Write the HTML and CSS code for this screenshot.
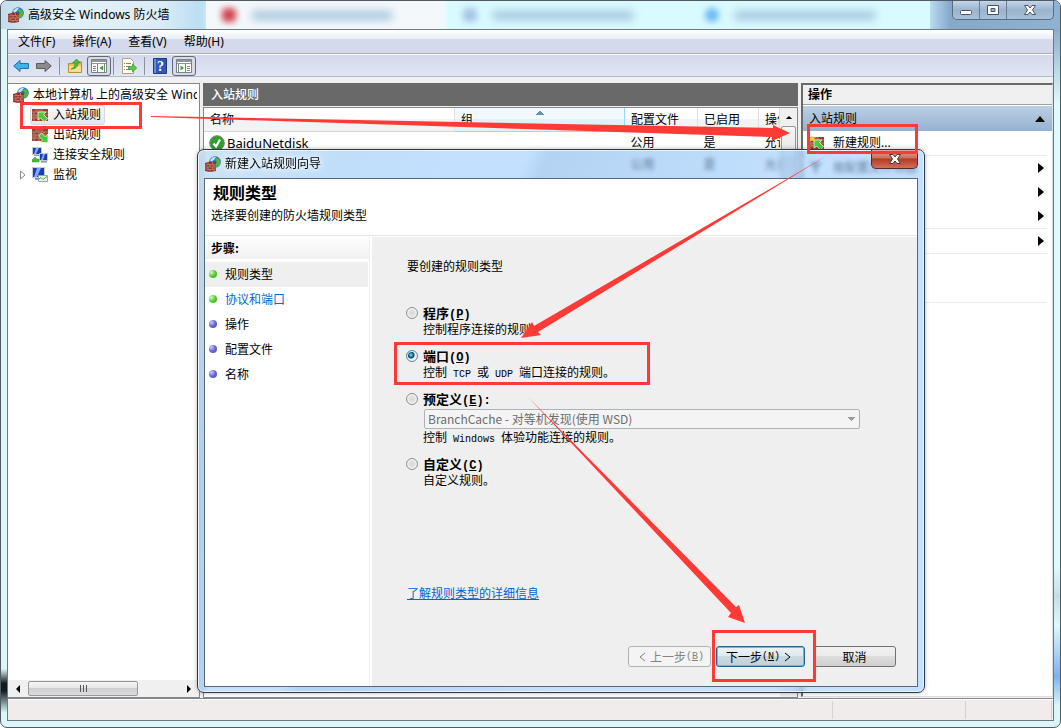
FILE: index.html
```html
<!DOCTYPE html>
<html lang="zh-CN">
<head>
    <meta charset="UTF-8">
    <meta name="viewport" content="width=device-width, initial-scale=1.0">
    <title>高级安全 Windows 防火墙</title>
    <link rel="stylesheet" href="styles.css">
</head>
<body>
    <!-- shared icons -->
    <svg class="symbols" aria-hidden="true">
        <symbol id="bricks" viewBox="0 0 16 16">
            <path fill="#96402f" d="M0 2h16v12H0z"/>
            <path stroke="#c98f80" stroke-width=".8" d="M0 5h16M0 8h16M0 11h16M4 2v3M10 2v3M2 5v3M7 5v3M12 5v3M4 8v3M10 8v3M2 11v3M7 11v3M12 11v3"/>
            <path fill="#b9604d" d="M5 2.500h4v2H5zM8 5.500h3v2H8zM0 8.500h3v2H0z"/>
        </symbol>
        <symbol id="firewall" viewBox="0 0 16 16">
            <circle cx="10" cy="6" r="5.800" fill="#2468b4"/>
            <path fill="#bfe4fa" d="M5 4q3-4 6-3-1 3-5 5z"/>
            <path fill="#55b53c" d="M11 1.500l3 1.500 1.500 3-1.500 4-3 1-1-3 2-2-2-2z"/>
            <path fill="#8a3528" d="M0 7l5-1.500 6 1V15l-6 1-5-1z"/>
            <path fill="none" stroke="#cf9686" stroke-width=".7" d="M0 9l5-.5 6 .5M0 11h11M0 13l5 .5 6-.5M3 6.500v2.300M7.500 6v2.500M5 8.500V11M9 8.700V11M3 11v2.200M7.500 11v2.200M5 13.500V16M9 13.200V15.500"/>
        </symbol>
        <symbol id="inbound" viewBox="0 0 16 16">
            <use href="#bricks"/>
            <path fill="#4ec83b" stroke="#e9ffe4" stroke-width=".8" d="M6 5h8l-2.500 2.500 4 4-3 3.500-4-4L6 13z"/>
        </symbol>
        <symbol id="outbound" viewBox="0 0 16 16">
            <use href="#bricks"/>
            <path fill="#4ec83b" stroke="#e9ffe4" stroke-width=".8" d="M16 15.500H8l2.500-2.500-4-4 3-3 4 4L16 7z"/>
        </symbol>
        <symbol id="caret" viewBox="0 0 6 10">
            <path d="M0 0l6 5-6 5z"/>
        </symbol>
    </svg>

    <div class="window">
        <div class="titlebar">
            <svg class="icon"><use href="#firewall"/></svg>
            <h1>高级安全 Windows 防火墙</h1>
            <div class="backdrop" aria-hidden="true">
                <i class="tab tab-white"><b class="blob red"></b><b class="line"></b></i>
                <i class="tab"><b class="blob"></b><b class="line"></b></i>
                <i class="tab"><b class="blob sky"></b><b class="line"></b></i>
                <i class="rest"></i>
            </div>
            <div class="window-buttons">
                <button aria-label="最小化"><svg width="14" height="12"><rect x="1.500" y="6.500" width="11" height="4" rx="1" fill="#fff" stroke="#4c5564"/></svg></button>
                <button aria-label="最大化"><svg width="14" height="12"><path fill="#fff" fill-rule="evenodd" stroke="#4c5564" d="M1.500 1.500h11v9h-11zM5 4.500h4v3H5z"/></svg></button>
                <button class="wide" aria-label="关闭"><svg width="14" height="12"><path fill="#fff" stroke="#4c5564" d="M1.500 1.500h3.500l2 2.500 2-2.500h3.500L9.500 6l3 4.500H9L7 8l-2 2.500H1.500l3-4.500z"/></svg></button>
            </div>
        </div>

        <div class="client">
            <div class="menubar">
                <button>文件(F)</button>
                <button>操作(A)</button>
                <button>查看(V)</button>
                <button>帮助(H)</button>
            </div>

            <div class="toolbar">
                <button aria-label="后退"><svg class="icon"><path fill="#3fb2ea" stroke="#1f6fae" d="M.7 8L7 2.500V5.500h8.500v5H7v3z"/></svg></button>
                <button aria-label="前进"><svg class="icon"><path fill="#8b8b8b" stroke="#5d5d5d" d="M15.300 8L9 2.500V5.500H.5v5H9v3z"/></svg></button>
                <span class="divider"></span>
                <button aria-label="向上"><svg class="icon"><path fill="#e9c25c" stroke="#b98f30" d="M1.500 5.500h5l1-1.500h7v10.500h-13z"/><path fill="#f7dd8d" d="M2 8h12v6H2z"/><path fill="#4bbb36" stroke="#2c8a20" stroke-width=".6" d="M4 11c3-1 4-3 4-6H5.500L9.500 1l4 4H11c0 4-3 6-7 6z"/></svg></button>
                <button class="pressed" aria-label="显示/隐藏控制台树"><svg class="icon"><path fill="#fff" stroke="#7d828a" d="M.5 1.500h15v13H.5z"/><path fill="#8f959e" d="M1 2h14v2H1zM1 5h14v1H1z"/><path stroke="#7d828a" d="M6.500 6v8M2 8.500h3M2 10.500h3M2 12.500h3M13.500 6v8"/><path fill="#35a82d" d="M12 7.500v5L8.500 10z"/></svg></button>
                <span class="divider"></span>
                <button aria-label="导出列表"><svg class="icon"><path fill="#fffdf0" stroke="#a9a28a" d="M1.500.5h8l3 3v12h-11z"/><path stroke="#8a8570" d="M3 5.500h1M5 5.500h5M3 8.500h1M5 8.500h4M3 11.500h1M5 11.500h4"/><path fill="#59c644" stroke="#2f8f24" stroke-width=".6" d="M7.500 8.500h4v-2.500l4.300 4-4.300 4v-2.500h-4z"/></svg></button>
                <span class="divider"></span>
                <button aria-label="帮助"><svg class="icon"><path fill="#3358b4" stroke="#1f3a85" d="M1.500.5h13v15h-13z"/><path fill="#6c8cd8" d="M2 1h2v14H2z"/><text class="help-mark" x="5" y="13">?</text></svg></button>
                <button class="pressed" aria-label="显示/隐藏操作窗格"><svg class="icon"><path fill="#fff" stroke="#7d828a" d="M.5 1.500h15v13H.5z"/><path fill="#8f959e" d="M1 2h14v2H1zM1 5h14v1H1z"/><path stroke="#7d828a" d="M9.500 6v8M11 8.500h3M11 10.500h3M11 12.500h3M2.500 6v8"/><path fill="#35a82d" d="M4.500 7.500v5L8 10z"/></svg></button>
            </div>

            <div class="panes">
                <div class="tree-pane">
                    <ul class="tree">
                        <li class="root"><svg class="icon"><use href="#firewall"/></svg><span>本地计算机 上的高级安全 Windows</span></li>
                        <li class="selected"><svg class="icon"><use href="#inbound"/></svg><span>入站规则</span></li>
                        <li><svg class="icon"><use href="#outbound"/></svg><span>出站规则</span></li>
                        <li><svg class="icon"><path fill="#1a3bb5" stroke="#c3cad8" d="M.5.5h9v7h-9z"/><path fill="#7fa8f5" d="M4 1h3L4 7H2z"/><path fill="#1a3bb5" stroke="#c3cad8" d="M7.500 6.500h8v7h-8z"/><path fill="#7fa8f5" d="M11 7h2l-2 6H9z"/><path fill="#8d96a4" d="M2 8h5v1H2zM9 14h6v1.500H9z"/><path fill="#4bbb36" stroke="#2c8a20" stroke-width=".4" d="M0 13l3-3 2 2h2v3H0z"/></svg><span>连接安全规则</span></li>
                        <li class="expandable"><svg class="twist" viewBox="0 0 6 10"><path fill="#fff" stroke="#8a8a8a" d="M.5 1l4.500 4L.5 9z"/></svg><svg class="icon"><path fill="#1a3bb5" stroke="#c3cad8" d="M.5.5h12v10H.5z"/><path fill="#7fa8f5" d="M5 1h4L5 10H2z"/><path fill="#8d96a4" d="M3 11h5v2H3z"/><path fill="#eef6f4" stroke="#8fa6b5" d="M6.500 8.500h9v6h-9z"/><path fill="none" stroke="#35a82d" d="M7 12l2-1.500 2 2 4-3"/></svg><span>监视</span></li>
                    </ul>
                    <div class="hscroll">
                        <svg viewBox="0 0 6 10"><path d="M5 1v8L1 5z"/></svg>
                        <div class="thumb"><i></i><i></i><i></i></div>
                        <svg viewBox="0 0 6 10"><path d="M1 1v8l4-4z"/></svg>
                    </div>
                </div>

                <div class="list-pane">
                    <h2>入站规则</h2>
                    <div class="list">
                        <table>
                            <colgroup><col><col class="col-group"><col class="col-profile"><col class="col-enabled"><col class="col-action"></colgroup>
                            <thead>
                                <tr><th>名称</th><th class="sorted">组</th><th>配置文件</th><th>已启用</th><th>操作</th></tr>
                            </thead>
                            <tbody>
                                <tr>
                                    <td class="name"><svg class="icon"><circle cx="8" cy="8" r="7.300" fill="#2f9f2b" stroke="#7b817b"/><path fill="none" stroke="#fff" stroke-width="2.200" d="M4.500 8.500l2.500 3 4-7"/></svg>BaiduNetdisk</td>
                                    <td></td><td>公用</td><td>是</td><td>允许</td>
                                </tr>
                                <tr><td></td><td></td><td>公用</td><td>是</td><td>允许</td></tr>
                            </tbody>
                        </table>
                        <div class="vscroll">
                            <svg viewBox="0 0 10 6"><path d="M1 5h8L5 1z"/></svg>
                            <div class="thumb"></div>
                        </div>
                    </div>
                </div>

                <div class="action-pane">
                    <h2>操作</h2>
                    <div class="action-title"><span>入站规则</span><svg width="10" height="6"><path d="M0 6h10L5 0z"/></svg></div>
                    <button class="action last"><svg class="icon"><use href="#inbound"/><path fill="#f6c93a" d="M4 0l1 2.500L8 2 6 4l1.500 3L4 5.500 1 7l1-3-2-2 3 .5z"/></svg><span>新建规则...</span></button>
                    <button class="action"><svg class="icon"><path fill="#5a5f66" d="M1 2h13L9 8v6l-3-2V8z"/></svg><span>按配置文件筛选</span><svg class="caret"><use href="#caret"/></svg></button>
                    <button class="action" aria-label="按状态筛选"><svg class="caret"><use href="#caret"/></svg></button>
                    <button class="action last" aria-label="按组筛选"><svg class="caret"><use href="#caret"/></svg></button>
                    <button class="action last" aria-label="查看"><svg class="caret"><use href="#caret"/></svg></button>
                    <button class="action" aria-label="刷新"></button>
                    <button class="action last" aria-label="导出列表"></button>
                </div>
            </div>

            <div class="statusbar"><span></span><span></span><span></span></div>
        </div>
    </div>

    <div class="dialog" role="dialog" aria-labelledby="wizard-name">
        <div class="dialog-title">
            <svg class="icon"><use href="#firewall"/></svg>
            <span id="wizard-name">新建入站规则向导</span>
            <button class="dialog-close" aria-label="关闭"><svg width="14" height="12"><path fill="#fff" stroke="#5a3a3a" d="M1.500 1.500h3.500l2 2.500 2-2.500h3.500L9.500 6l3 4.500H9L7 8l-2 2.500H1.500l3-4.500z"/></svg></button>
        </div>
        <div class="wizard">
            <div class="wizard-header">
                <h2>规则类型</h2>
                <p>选择要创建的防火墙规则类型</p>
            </div>
            <div class="wizard-body">
                <div class="steps">
                    <h3>步骤:</h3>
                    <ul>
                        <li class="done current">规则类型</li>
                        <li class="done"><a href="#">协议和端口</a></li>
                        <li>操作</li>
                        <li>配置文件</li>
                        <li>名称</li>
                    </ul>
                </div>
                <form class="page">
                    <p class="prompt">要创建的规则类型</p>
                    <div class="option">
                        <input type="radio" name="type" id="type-program">
                        <label for="type-program">程序<span class="latin">(<u>P</u>)</span></label>
                        <p>控制程序连接的规则</p>
                    </div>
                    <div class="option">
                        <input type="radio" name="type" id="type-port" checked>
                        <label for="type-port">端口<span class="latin">(<u>O</u>)</span></label>
                        <p>控制<span class="latin"> TCP </span>或<span class="latin"> UDP </span>端口连接的规则。</p>
                    </div>
                    <div class="option">
                        <input type="radio" name="type" id="type-predefined">
                        <label for="type-predefined">预定义<span class="latin">(<u>E</u>):</span></label>
                        <select aria-label="预定义" disabled><option>BranchCache - 对等机发现(使用 WSD)</option></select>
                        <p>控制<span class="latin"> Windows </span>体验功能连接的规则。</p>
                    </div>
                    <div class="option">
                        <input type="radio" name="type" id="type-custom">
                        <label for="type-custom">自定义<span class="latin">(<u>C</u>)</span></label>
                        <p>自定义规则。</p>
                    </div>
                    <a class="more" href="#">了解规则类型的详细信息</a>
                    <div class="buttons">
                        <button type="button" disabled><svg width="7" height="10"><path d="M6 1L1 5l5 4"/></svg>上一步<span class="latin">(<u>B</u>)</span></button>
                        <button type="button" class="primary">下一步<span class="latin">(<u>N</u>)</span><svg width="7" height="10"><path d="M1 1l5 4-5 4"/></svg></button>
                        <button type="button">取消</button>
                    </div>
                </form>
            </div>
        </div>
    </div>

    <!-- red boxes and arrows drawn on top of the windows -->
    <svg class="marks" width="1061" height="728" viewBox="0 0 1061 728" aria-hidden="true">
        <g fill="none" stroke="#fe3a37" stroke-width="3">
            <path d="M21.500 103.500h119v24h-119z"/>
            <path d="M808.500 125.500h108v27h-108z"/>
            <path d="M395.500 343.500h253v40h-253z"/>
            <path d="M713.500 631.500h101v49h-101z"/>
        </g>
        <g fill="#fe3a37">
            <path d="M151 116L773 128v-3l17 8-18 8v-4L151 117z"/>
            <path d="M828 155L534 326l-2-4-11 16 20-3-3-3z"/>
            <path d="M527 396L736 607l3-2 6 18-17-6 3-4z"/>
        </g>
    </svg>
</body>
</html>
```

FILE: styles.css
```css
* {
    box-sizing: border-box;
}

body {
    margin: 0;
    height: 100vh;
    overflow: hidden;
    font-family: "Noto Sans", "Noto Sans CJK SC", sans-serif;
    font-size: 12px;
    line-height: 16px;
    color: #000;
}

h1, h2, h3, p, ul {
    margin: 0;
    padding: 0;
    font-size: 12px;
    font-weight: 400;
    list-style: none;
}

button {
    margin: 0;
    padding: 0;
    border: none;
    background: none;
    font: inherit;
    color: inherit;
}

.symbols {
    position: absolute;
    width: 0;
    height: 0;
}

.icon {
    width: 16px;
    height: 16px;
    flex: none;
}

/* main window */
.window {
    height: 100vh;
    display: flex;
    flex-direction: column;
    padding: 0 6px 6px;
    border: 1px solid #4f5a63;
    border-radius: 7px;
    background:
        linear-gradient(transparent 92%, #111a20 94%, #111a20 95%, transparent 98%) left / 6px 100% no-repeat,
        linear-gradient(#86a6c6 3%, #ddfafd 14%, #ddfafd 78%, #c4dfe8 82%, #ddfafd 86%, #7db2f0 93%, #d8f5f8 97%) right / 6px 100% no-repeat,
        #dcf6fa;
}

.titlebar {
    position: relative;
    isolation: isolate;
    display: flex;
    align-items: center;
    height: 28px;
    padding-left: 1px;
    gap: 4px;
}

/* blurred browser tabs showing through the glass */
.backdrop {
    position: absolute;
    z-index: -1;
    inset: 0 -6px;
    display: flex;
    padding-left: 205px;
    overflow: hidden;
    border-radius: 6px 6px 0 0;
    background: linear-gradient(90deg, #c5dced, #e2f2f8 60px, #dcebf7 160px, #b5dcf2 205px);
}

.tab {
    flex: 1;
    display: flex;
    align-items: center;
    gap: 16px;
    padding: 0 16px;
    background: #d9fafe;
    box-shadow: 0 0 8px #d9fafe;
}

.tab-white {
    background: #f4f8fb;
}

.rest {
    width: 130px;
    background: linear-gradient(90deg, #b8dcf0, #86a9cb 20px, #8fb2d2);
}

.blob {
    width: 14px;
    height: 14px;
    border-radius: 4px;
    background: #a8c4e6;
    filter: blur(3px);
}

.blob.red {
    background: #d04450;
}

.blob.sky {
    border-radius: 50%;
    background: #6ab8f5;
}

.line {
    width: 140px;
    height: 9px;
    background: #a5c6de;
    filter: blur(4px);
}

.window-buttons {
    align-self: flex-start;
    display: flex;
    margin-left: auto;
    border: 1px solid #5b6c7f;
    border-top: none;
    border-radius: 0 0 5px 5px;
    background: linear-gradient(#c4d6e8, #9ab3cd 50%, #a9c2dc);
}

.window-buttons button {
    width: 27px;
    height: 18px;
    display: flex;
    align-items: center;
    justify-content: center;
    border-right: 1px solid #6b7d90;
}

.window-buttons .wide {
    width: 46px;
    border-right: none;
}

.client {
    flex: 1;
    min-height: 0;
    display: flex;
    flex-direction: column;
    border: 1px solid #6d7880;
    background: #f0f0f0;
}

.menubar {
    display: flex;
    height: 24px;
    padding-left: 10px;
    gap: 17px;
    border-bottom: 1px solid #a9aebc;
    background: linear-gradient(#fff, #e9edf5 9px, #d4d9ec 9px);
}

.toolbar {
    display: flex;
    align-items: center;
    height: 23px;
    padding-left: 5px;
    gap: 7px;
    border-top: 1px solid #fff;
    border-bottom: 1px solid #b2bacf;
    background: linear-gradient(#d3d8eb, #e1e6f3);
}

.toolbar button {
    width: 16px;
    height: 16px;
    display: flex;
}

.toolbar .pressed {
    width: 24px;
    height: 20px;
    padding: 1px 3px;
    margin: 0 -5px 0 -3px;
    border: 1px solid #5f6a7d;
    border-radius: 3px;
    background: #d8dbe4;
}

.divider {
    width: 1px;
    height: 18px;
    background: #8b92a3;
}

.help-mark {
    font: bold 14px "Liberation Serif", serif;
    fill: #fff;
}

.panes {
    flex: 1;
    min-height: 0;
    display: flex;
    gap: 3px;
    padding-top: 6px;
    border-bottom: 1px solid #84888c;
}

.tree-pane {
    width: 192px;
    display: flex;
    flex-direction: column;
    justify-content: space-between;
    border: 1px solid #828790;
    border-left: none;
    background: #fff;
}

.tree {
    padding: 1px 2px 0 0;
}

.tree li {
    display: flex;
    align-items: center;
    height: 20px;
    padding-left: 24px;
    gap: 5px;
    white-space: nowrap;
}

.tree span {
    min-width: 0;
    overflow: hidden;
}

.tree .root {
    padding-left: 5px;
    gap: 4px;
}

.tree .selected {
    width: 75px;
    margin-left: 22px;
    padding-left: 1px;
    border: 1px solid #d9d9d9;
    border-radius: 3px;
    background: linear-gradient(#fafafa, #e6e6e6);
}

.tree .expandable {
    padding-left: 12px;
}

.twist {
    width: 6px;
    height: 10px;
    margin-right: 1px;
}

.hscroll {
    display: flex;
    align-items: center;
    height: 17px;
    padding: 0 7px;
    background: #f0f0f0;
}

.hscroll svg {
    width: 6px;
    height: 10px;
}

.thumb {
    border: 1px solid #979797;
    border-radius: 2px;
    background: linear-gradient(#f5f5f5, #e6e6e8 50%, #cfcfd3 50%, #dcdcde);
}

.hscroll .thumb {
    display: flex;
    justify-content: center;
    align-items: center;
    gap: 2px;
    width: 110px;
    height: 15px;
    margin: 0 auto 0 7px;
}

.thumb i {
    width: 1px;
    height: 7px;
    background: #555;
}

.list-pane {
    flex: 1;
    min-width: 0;
    display: flex;
    flex-direction: column;
}

.list-pane h2 {
    padding: 4px 8px;
    margin-bottom: 1px;
    line-height: 15px;
    color: #fff;
    font-weight: 500;
    background: #696969;
}

.list {
    flex: 1;
    min-height: 0;
    display: flex;
    overflow: hidden;
    border: 1px solid #828790;
    background: #fff;
}

.list table {
    flex: 1;
    align-self: flex-start;
    width: 100%;
    min-width: 0;
    table-layout: fixed;
    border-collapse: collapse;
}

.col-group {
    width: 170px;
}

.col-profile {
    width: 73px;
}

.col-enabled {
    width: 61px;
}

.col-action {
    width: 21px;
}

th, td {
    height: 22px;
    padding: 0 0 0 6px;
    overflow: hidden;
    font-weight: 400;
    text-align: left;
    white-space: nowrap;
}

th {
    height: 23px;
    padding-top: 2px;
    border-right: 1px solid #dedfe1;
    border-bottom: 1px solid #d5d5d5;
    background: linear-gradient(#fff 50%, #f2f3f5 50%);
}

th.sorted {
    border: 1px solid #96d9f9;
    border-top: none;
    background:
        linear-gradient(to bottom right, transparent 50%, #5f93b5 50%) calc(50% - 2px) 3px / 4px 4px no-repeat,
        linear-gradient(to bottom left, transparent 50%, #5f93b5 50%) calc(50% + 2px) 3px / 4px 4px no-repeat,
        linear-gradient(#f2f9fc 50%, #e1f1f9 50%);
}

td.name {
    display: flex;
    align-items: center;
    gap: 2px;
    padding-left: 5px;
    font-size: 13px;
}

.vscroll {
    width: 17px;
    display: flex;
    flex-direction: column;
    align-items: center;
    padding-top: 7px;
    gap: 6px;
    background: #f0f0f0;
}

.vscroll svg {
    width: 8px;
    height: 5px;
}

.vscroll .thumb {
    width: 15px;
    height: 60px;
}

.action-pane {
    width: 252px;
    margin-bottom: 1px;
    border: 2px solid #696969;
    border-right: 1px solid #ddd;
    border-bottom: 1px solid #ddd;
    background: #fff;
}

.action-pane h2 {
    height: 20px;
    padding: 2px 5px;
    font-weight: 700;
    border-bottom: 1px solid #a0a0a0;
    background: #f0f0f0;
}

.action-title {
    display: flex;
    align-items: center;
    justify-content: space-between;
    height: 25px;
    padding: 0 7px 0 6px;
    margin-top: 1px;
    background: linear-gradient(#bccfe4, #94b2d3);
}

.action {
    display: flex;
    align-items: center;
    width: calc(100% - 5px);
    height: 24px;
    padding: 0 3px 0 5px;
    gap: 9px;
}

.action.last {
    height: 25px;
    border-bottom: 1px solid #ececec;
}

.caret {
    width: 6px;
    height: 10px;
    margin-left: auto;
}

.statusbar {
    display: flex;
    height: 21px;
    padding: 1px 1px 1px 0;
    border-top: 1px solid #fff;
    background: #f0eceb;
}

.statusbar span {
    width: 86px;
    border-right: 1px solid #d5d1d0;
}

.statusbar span:first-child {
    flex: 1;
}

.statusbar span:nth-child(2) {
    width: 133px;
}

/* wizard window */
.dialog {
    position: absolute;
    inset: 149px 136px 35px 197px;
    display: flex;
    flex-direction: column;
    padding: 0 6px 5px;
    border: 1px solid #2c3947;
    border-radius: 7px;
    background: linear-gradient(115deg, rgba(190, 218, 240, .75), rgba(150, 200, 245, .6) 140px, rgba(155, 204, 255, .6) 240px, rgba(155, 204, 255, .6) 300px, rgba(130, 180, 235, .6) 320px, rgba(155, 204, 255, .6) 560px);
    backdrop-filter: blur(2px);
    box-shadow: inset 0 0 0 1px rgba(255, 255, 255, .7), 0 0 4px rgba(0, 0, 0, .3);
}

.dialog-title {
    display: flex;
    align-items: center;
    height: 28px;
    gap: 4px;
    padding-left: 1px;
}

#wizard-name {
    text-shadow: 0 0 6px #fff, 0 0 6px #fff;
}

.dialog-close {
    align-self: flex-start;
    display: flex;
    align-items: center;
    justify-content: center;
    width: 47px;
    height: 19px;
    margin-left: auto;
    border: 1px solid #5a2a2a;
    border-top: none;
    border-radius: 0 0 5px 5px;
    background: linear-gradient(#e3a69a, #cf6b58 45%, #b43a22 50%, #d0705a);
}

.wizard {
    flex: 1;
    min-height: 0;
    display: flex;
    flex-direction: column;
    border: 1px solid #56677a;
    background: #fff;
    font-family: "Noto Sans CJK SC", sans-serif;
}

.wizard-header {
    height: 57px;
    padding: 3px 6px;
    border-bottom: 1px solid #e6e6e6;
}

.wizard-header h2 {
    padding-left: 2px;
    margin-bottom: 5px;
    font-size: 16px;
    font-weight: 700;
    line-height: 20px;
}

.wizard-body {
    flex: 1;
    display: flex;
    gap: 2px;
    padding-top: 1px;
}

.steps {
    width: 165px;
    border-right: 1px solid #f0f0f0;
}

.steps h3 {
    height: 22px;
    margin-bottom: 3px;
    padding: 3px 6px;
    font-weight: 700;
    background: linear-gradient(#fff, #f0f0f0);
}

.steps li {
    display: flex;
    align-items: center;
    height: 25px;
    margin-right: 1px;
    padding: 0 0 2px 4px;
    gap: 8px;
}

.steps li::before {
    content: "";
    width: 8px;
    height: 8px;
    border-radius: 50%;
    background: radial-gradient(circle at 30% 30%, #c9c9ff, #6464cc 50%, #5252b8);
}

.steps .done::before {
    background: radial-gradient(circle at 30% 30%, #d0ffc0, #56c936 50%, #3fa826);
}

.steps .current {
    background: #efefef;
}

a {
    color: #0066cc;
}

.steps a {
    text-decoration: none;
}

.page {
    flex: 1;
    display: flex;
    flex-direction: column;
    padding: 21px 21px 19px 35px;
    background: #efefef;
}

.prompt {
    margin-bottom: 31px;
}

.option {
    display: grid;
    grid-template-columns: 16px 1fr;
    align-items: start;
    margin: 0 36px 11px 0;
}

.option input {
    appearance: none;
    width: 12px;
    height: 12px;
    margin: 2px 0 0 -1px;
    border: 1px solid #8e8f8f;
    border-radius: 50%;
    background: radial-gradient(#d5d8da, #f4f4f4);
    box-shadow: inset 0 0 0 1px #f4f4f4;
}

.option input:checked {
    border-color: #5586a3;
    background: radial-gradient(circle at 40% 40%, #8fdcf5, #1c78a8 2px, #0c3a5c 3px, #e6eef2 4px);
}

.option label {
    height: 16px;
    font-size: 13px;
    font-weight: 700;
}

.option p {
    grid-column: 2;
    height: 16px;
}

.option select {
    grid-column: 2;
    appearance: none;
    height: 20px;
    margin: 2px 0 0 1px;
    padding: 0 3px;
    border: 1px solid #adb2b5;
    border-radius: 2px;
    font: inherit;
    color: #6d6d6d;
    opacity: 1;
    background:
        linear-gradient(to top right, transparent 50%, #999 50%) right 8px center / 4px 4px no-repeat,
        linear-gradient(to top left, transparent 50%, #999 50%) right 4px center / 4px 4px no-repeat,
        #f4f4f4;
}

/* half-width letters next to 12px Chinese text */
.latin {
    font-family: "Liberation Mono", monospace;
    font-size: 10px;
    line-height: 1;
    white-space: pre;
}

label .latin {
    font-size: 12px;
}

.more {
    align-self: flex-start;
    margin-top: auto;
}

.buttons {
    display: flex;
    justify-content: flex-end;
    gap: 5px;
    margin-top: 45px;
}

.buttons button {
    display: flex;
    align-items: center;
    justify-content: center;
    width: 83px;
    height: 21px;
    border: 1px solid #707070;
    border-radius: 3px;
    background: linear-gradient(#f2f2f2, #ebebeb 50%, #dddddd 50%, #cfcfcf);
}

.buttons .primary {
    width: 89px;
    margin-right: 3px;
    border-color: #2c628b;
    background: linear-gradient(#eaf2f5, #dfe9ee 50%, #cbd9e1 50%, #c2d0d8);
    box-shadow: inset 0 0 0 1px #3fc8f2;
}

.buttons button:disabled {
    border-color: #adb2b5;
    color: #838383;
    background: #f4f4f4;
}

.buttons svg {
    margin: 0 4px;
    fill: none;
    stroke: currentColor;
}

/* annotations */
.marks {
    position: absolute;
    top: 0;
    left: 0;
    pointer-events: none;
}
```
